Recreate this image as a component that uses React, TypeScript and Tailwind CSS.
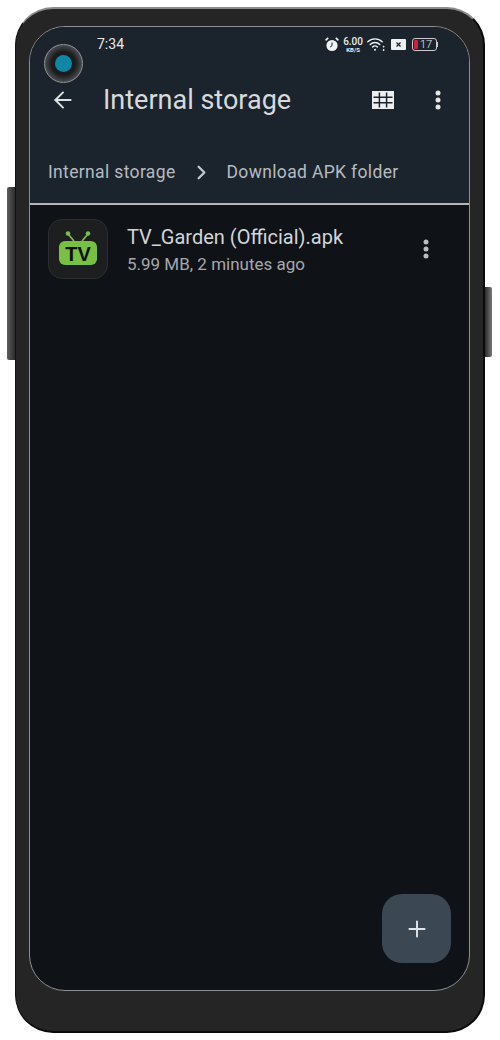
import { ArrowLeft, ChevronRight, Plus } from 'lucide-react';

const font = { fontFamily: 'Roboto, "Noto Sans", sans-serif' };

const KebabIcon = ({ color }: { color: string }) => (
  <svg width="6" height="20" viewBox="0 0 6 20" fill={color}>
    <circle cx="3" cy="3" r="2.5" />
    <circle cx="3" cy="10" r="2.5" />
    <circle cx="3" cy="17" r="2.5" />
  </svg>
);

const GridIcon = () => (
  <svg width="22" height="18" viewBox="0 0 22 18">
    <rect width="22" height="18" fill="#eceef0" />
    <path d="M7.4 1.5v15M14.6 1.5v15M1.5 6.2h19M1.5 11.8h19" stroke="#1b232c" strokeWidth="1.5" />
  </svg>
);

const AlarmIcon = () => (
  <svg width="14" height="15" viewBox="0 0 14 15">
    <circle cx="7" cy="8.5" r="5.6" fill="#f1f2f3" />
    <path d="M7 5.5V8.7L5.2 10" stroke="#1b232b" strokeWidth="1" fill="none" />
    <path d="M.6 3.4 3.2.9M13.4 3.4 10.8.9" stroke="#f1f2f3" strokeWidth="1.6" />
  </svg>
);

const WifiIcon = () => (
  <svg width="18" height="15" viewBox="0 0 18 15" fill="none" stroke="#f1f2f3" strokeWidth="1.4" strokeLinecap="round">
    <path d="M.8 4.8C4.8.9 11.2.9 15.2 4.8" />
    <path d="M3.2 7.4c2.7-2.6 6.9-2.6 9.6 0" />
    <path d="M5.6 10c1.4-1.3 3.4-1.3 4.8 0" />
    <circle cx="8" cy="12.8" r="1" fill="#f1f2f3" stroke="none" />
    <circle cx="16.6" cy="9.6" r=".9" fill="#f1f2f3" stroke="none" />
    <circle cx="16.6" cy="13" r=".9" fill="#f1f2f3" stroke="none" />
  </svg>
);

const SimIcon = () => (
  <div className="flex h-[11px] w-[15px] items-center justify-center rounded-[1px] bg-[#eef0f1]">
    <svg width="5" height="5" viewBox="0 0 5 5" stroke="#1b232b" strokeWidth="1.3">
      <path d="M.5.5l4 4M4.5.5l-4 4" />
    </svg>
  </div>
);

const BatteryIcon = () => (
  <div className="flex items-center">
    <div className="flex h-[13px] w-[25px] items-center gap-[2px] rounded-[3px] border border-[#c9cbcd] pl-[1px]">
      <div className="h-[9px] w-[4px] rounded-[1px] bg-[#d3203f]" />
      <span className="text-[11px] leading-none font-light text-[#e9ebec]">17</span>
    </div>
    <div className="h-[5px] w-[1px] bg-[#c9cbcd]" />
  </div>
);

const TvAppIcon = () => (
  <div className="flex h-[60px] w-[60px] items-center justify-center rounded-[14px] border border-[#2b2f32] bg-[#1c1e1f] pb-[3px]">
    <svg width="38" height="36" viewBox="0 0 38 36">
      <path d="M15 11 9 4M23 11l6-7" stroke="#7dbc4c" strokeWidth="1.8" />
      <circle cx="9" cy="3.5" r="2.3" fill="#7dbc4c" />
      <circle cx="29" cy="3.5" r="2.3" fill="#7dbc4c" />
      <rect x="0" y="11" width="38" height="24" rx="6" fill="#77c043" />
      <text x="19" y="30.5" textAnchor="middle" fontSize="20" fontWeight="700" fill="#0c0f0a" style={{ fontFamily: '"Liberation Sans", sans-serif' }}>
        TV
      </text>
    </svg>
  </div>
);

export default function App() {
  return (
    <div className="relative h-[1040px] w-[500px] overflow-hidden bg-white pt-[7px] pl-[15px]" style={font}>
      <div className="absolute top-[187px] left-[7px] h-[173px] w-[8px] rounded-l-[2px] bg-gradient-to-r from-[#5e5e5e] to-[#2c2c2c]" />
      <div className="absolute top-[287px] left-[485px] h-[70px] w-[7px] rounded-r-[2px] bg-gradient-to-r from-[#2c2c2c] to-[#7a7a7a]" />

      <div className="h-[1026px] w-[470px] rounded-[38px] border-t-2 border-r-2 border-b-2 border-l border-t-[#8b8b8b] border-r-[#0a0a0a] border-b-[#0a0a0a] border-l-[#111111] bg-[#252525] pt-[17px] pl-[13px]">
        <main className="relative flex h-[965px] w-[441px] flex-col overflow-hidden rounded-[36px] border border-[#8d9093] bg-[#0f1216]">
          <header className="flex h-[178px] flex-col border-b-2 border-b-[#b5b8bb] bg-[#1b232c]">
            <div className="flex h-[35px] items-center justify-between pr-[31px] pl-[67px]">
              <span className="text-[14px] text-[#e8eaec]">7:34</span>
              <div className="flex items-center gap-[4px]">
                <AlarmIcon />
                <div className="flex flex-col items-center leading-none font-medium text-[#eceeef]">
                  <span className="text-[10px] leading-[9px]">6.00</span>
                  <span className="text-[6px] leading-[7px] font-bold">KB/S</span>
                </div>
                <WifiIcon />
                <div className="ml-[2px]">
                  <SimIcon />
                </div>
                <div className="ml-[2px]">
                  <BatteryIcon />
                </div>
              </div>
            </div>

            <div className="mt-[2px] flex h-[72px] items-center pr-[28px] pl-[20px]">
              <ArrowLeft size={26} strokeWidth={1.8} color="#dfe2e5" />
              <h1 className="ml-[27px] flex-1 text-[27px] text-[#d7dadd]">Internal storage</h1>
              <GridIcon />
              <div className="ml-[41px]">
                <KebabIcon color="#e4e6e8" />
              </div>
            </div>

            <div className="mt-[23px] flex items-center pl-[18px] text-[17.5px] tracking-[0.35px] text-[#b6bbc0]">
              <span>Internal storage</span>
              <ChevronRight size={23} strokeWidth={2.4} color="#c3c7cb" className="mx-[14px]" />
              <span>Download APK folder</span>
            </div>
          </header>

          <section className="flex items-center pt-[14px] pr-[40px] pl-[18px]">
            <TvAppIcon />
            <div className="ml-[19px] flex-1">
              <div className="text-[20px] leading-[26px] text-[#d3d6d9]">TV_Garden (Official).apk</div>
              <div className="mt-[3px] text-[17px] leading-[22px] text-[#a5a9ad]">5.99 MB, 2 minutes ago</div>
            </div>
            <KebabIcon color="#b9bcc0" />
          </section>

          <button className="absolute right-[18px] bottom-[27px] flex h-[69px] w-[69px] items-center justify-center rounded-[20px] bg-[#3c4754]">
            <Plus size={26} strokeWidth={1.8} color="#dfe3e8" />
          </button>
        </main>
      </div>

      {/* punch hole camera sits over the status bar */}
      <div className="absolute top-[44px] left-[44px] flex h-[39px] w-[39px] items-center justify-center rounded-full border border-[#8e9296] bg-[radial-gradient(circle,#1a1c1f_45%,#5a5d60_80%,#2a2c2f_100%)]">
        <div className="h-[17px] w-[17px] rounded-full bg-[#0f86a8]" />
      </div>
    </div>
  );
}
